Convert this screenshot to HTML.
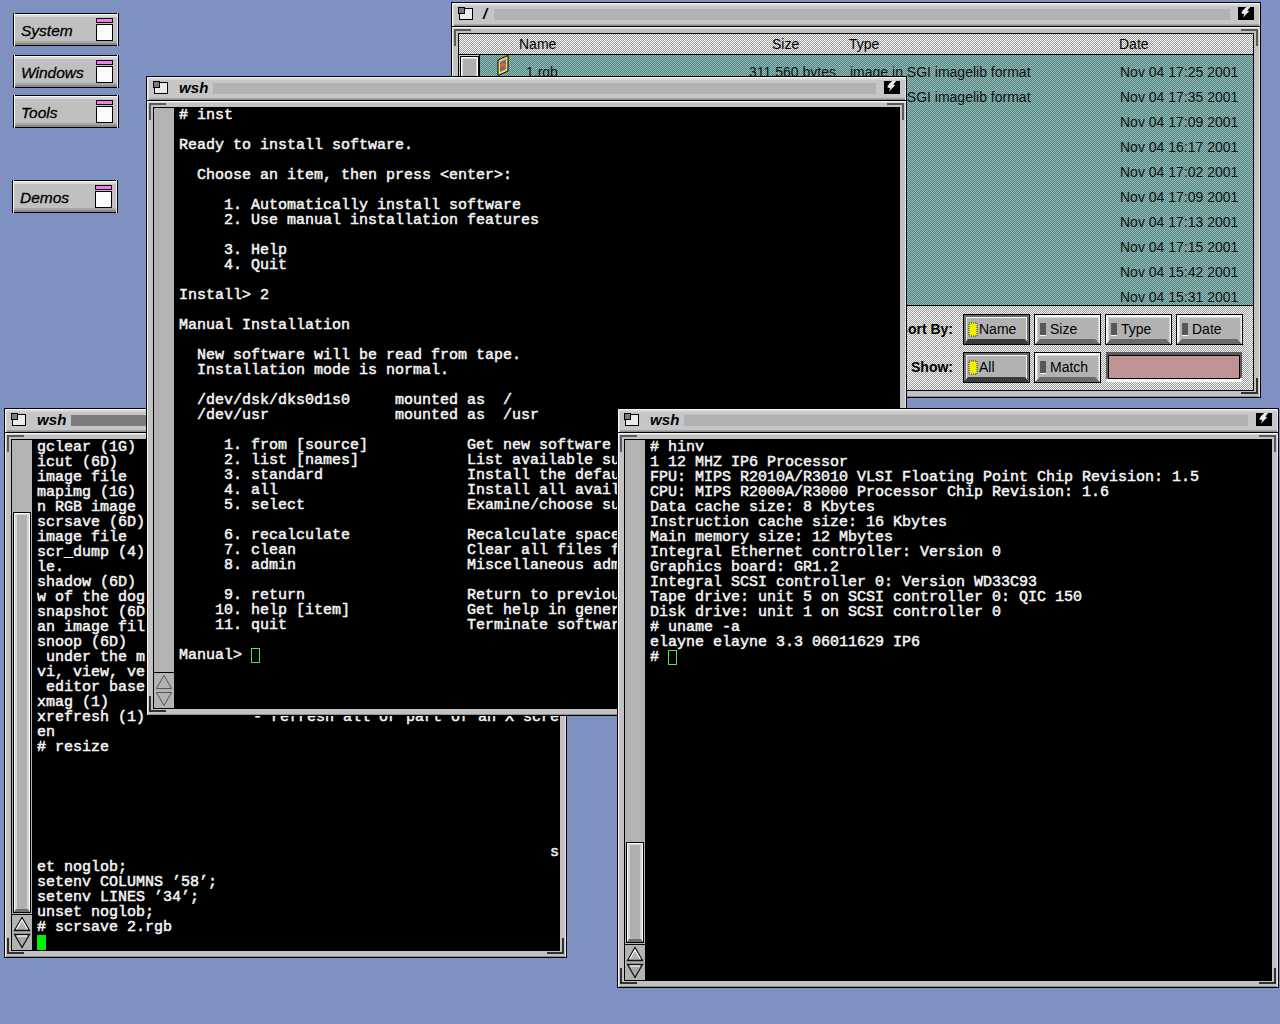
<!DOCTYPE html><html><head><meta charset="utf-8"><style>html,body{margin:0;padding:0}body{width:1280px;height:1024px;background:#7f91c0;position:relative;overflow:hidden;font-family:"Liberation Sans",sans-serif}</style></head><body>
<div style="position:absolute;left:13px;top:13px;width:106px;height:33px;background:linear-gradient(#000 0 1px,#f8f8f8 1px 2px,#d8d8d8 2px 4px,#c0c0c0 4px 28px,#a8a8a8 28px 30px,#8a8a8a 30px 32px,#000 32px);box-shadow:inset 1px 0 0 #000, inset -1px 0 0 #000, inset 2px 0 0 #f8f8f8, inset -2px 0 0 #e8e8e8"></div><div style="position:absolute;left:21px;top:20px;width:80px;height:22px;font:italic 15.5px/22px 'Liberation Sans',sans-serif;color:#000;-webkit-text-stroke:0.3px #000">System</div><div style="position:absolute;left:96px;top:18px;width:17px;height:5px;background:#f47af4;border:1px solid #000;box-sizing:border-box"></div><div style="position:absolute;left:96px;top:24px;width:17px;height:17px;background:#fbfbfb;border:1px solid #000;box-sizing:border-box"></div>
<div style="position:absolute;left:13px;top:55px;width:106px;height:33px;background:linear-gradient(#000 0 1px,#f8f8f8 1px 2px,#d8d8d8 2px 4px,#c0c0c0 4px 28px,#a8a8a8 28px 30px,#8a8a8a 30px 32px,#000 32px);box-shadow:inset 1px 0 0 #000, inset -1px 0 0 #000, inset 2px 0 0 #f8f8f8, inset -2px 0 0 #e8e8e8"></div><div style="position:absolute;left:21px;top:62px;width:80px;height:22px;font:italic 15.5px/22px 'Liberation Sans',sans-serif;color:#000;-webkit-text-stroke:0.3px #000">Windows</div><div style="position:absolute;left:96px;top:60px;width:17px;height:5px;background:#f47af4;border:1px solid #000;box-sizing:border-box"></div><div style="position:absolute;left:96px;top:66px;width:17px;height:17px;background:#fbfbfb;border:1px solid #000;box-sizing:border-box"></div>
<div style="position:absolute;left:13px;top:95px;width:106px;height:33px;background:linear-gradient(#000 0 1px,#f8f8f8 1px 2px,#d8d8d8 2px 4px,#c0c0c0 4px 28px,#a8a8a8 28px 30px,#8a8a8a 30px 32px,#000 32px);box-shadow:inset 1px 0 0 #000, inset -1px 0 0 #000, inset 2px 0 0 #f8f8f8, inset -2px 0 0 #e8e8e8"></div><div style="position:absolute;left:21px;top:102px;width:80px;height:22px;font:italic 15.5px/22px 'Liberation Sans',sans-serif;color:#000;-webkit-text-stroke:0.3px #000">Tools</div><div style="position:absolute;left:96px;top:100px;width:17px;height:5px;background:#f47af4;border:1px solid #000;box-sizing:border-box"></div><div style="position:absolute;left:96px;top:106px;width:17px;height:17px;background:#fbfbfb;border:1px solid #000;box-sizing:border-box"></div>
<div style="position:absolute;left:12px;top:180px;width:106px;height:33px;background:linear-gradient(#000 0 1px,#f8f8f8 1px 2px,#d8d8d8 2px 4px,#c0c0c0 4px 28px,#a8a8a8 28px 30px,#8a8a8a 30px 32px,#000 32px);box-shadow:inset 1px 0 0 #000, inset -1px 0 0 #000, inset 2px 0 0 #f8f8f8, inset -2px 0 0 #e8e8e8"></div><div style="position:absolute;left:20px;top:187px;width:80px;height:22px;font:italic 15.5px/22px 'Liberation Sans',sans-serif;color:#000;-webkit-text-stroke:0.3px #000">Demos</div><div style="position:absolute;left:95px;top:185px;width:17px;height:5px;background:#f47af4;border:1px solid #000;box-sizing:border-box"></div><div style="position:absolute;left:95px;top:191px;width:17px;height:17px;background:#fbfbfb;border:1px solid #000;box-sizing:border-box"></div>
<div style="position:absolute;left:451px;top:2px;width:810px;height:396px;background:#c2c2c2;outline:none;box-shadow:inset 0 0 0 1px #000"></div><div style="position:absolute;left:452px;top:3px;width:808px;height:23px;background:linear-gradient(#f6f6f6 0 1px,#d6d6d6 1px 3px,#c6c6c6 3px 21px,#a6a6a6 21px 22px,#8e8e8e 22px);box-shadow:inset 1px 0 0 #f6f6f6, inset 2px 0 0 #d6d6d6, inset -1px 0 0 #e6e6e6"></div><div style="position:absolute;left:452px;top:26px;width:808px;height:1px;background:#000"></div><div style="position:absolute;left:452px;top:27px;width:808px;height:370px;box-shadow:inset 1px 1px 0 #f6f6f6, inset 0 2px 0 #d6d6d6, inset -1px 0 0 #e6e6e6, inset 0 -1px 0 #8e8e8e"></div><div style="position:absolute;left:459px;top:8px;width:13px;height:11px;background:#ececec;border:1px solid #000;box-sizing:border-box;width:14px;height:12px"></div><div style="position:absolute;left:458px;top:7px;width:7px;height:7px;background:#7a7a7a;border:1px solid #000;box-sizing:border-box"></div><div style="position:absolute;left:483px;top:4px;width:60px;height:20px;font:italic bold 15px/20px 'Liberation Sans',sans-serif;color:#000;white-space:pre;letter-spacing:0.1px">/</div><div style="position:absolute;left:494px;top:9px;width:736px;height:11px;background:#b2b2b2"></div><div style="position:absolute;left:1238px;top:7px;width:16px;height:13px;"><svg width="16" height="13" viewBox="0 0 16 13" style="position:absolute;left:0;top:0"><rect width="16" height="13" fill="#000"/><polygon points="8.3,0 12.2,0 9.3,3.6 11.2,4.3 5,10.4 6.2,6.9 3.5,6.5 3.7,5.1 5.6,2.6" fill="#ececec"/></svg></div><div style="position:absolute;left:454px;top:29px;width:17px;height:2px;background:#5a5a5a"></div><div style="position:absolute;left:454px;top:29px;width:2px;height:17px;background:#5a5a5a"></div><div style="position:absolute;left:1241px;top:29px;width:17px;height:2px;background:#5a5a5a"></div><div style="position:absolute;left:1256px;top:29px;width:2px;height:17px;background:#5a5a5a"></div><div style="position:absolute;left:454px;top:392px;width:17px;height:2px;background:#303030"></div><div style="position:absolute;left:454px;top:378px;width:2px;height:16px;background:#303030"></div><div style="position:absolute;left:1241px;top:392px;width:17px;height:2px;background:#303030"></div><div style="position:absolute;left:1256px;top:378px;width:2px;height:16px;background:#303030"></div>
<div style="position:absolute;left:458px;top:33px;width:796px;height:358px;background:#000"></div>
<svg width="794" height="20" style="position:absolute;left:459px;top:34px" shape-rendering="crispEdges"><defs><pattern id="chk1" width="2" height="2" patternUnits="userSpaceOnUse"><rect width="2" height="2" fill="#fcfcfc"/><rect width="1" height="1" fill="#9a9a9a"/><rect x="1" y="1" width="1" height="1" fill="#9a9a9a"/></pattern></defs><rect width="794" height="20" fill="url(#chk1)"/></svg>
<div style="position:absolute;left:459px;top:55px;width:20px;height:250px;background:#cfcfcf"></div>
<div style="position:absolute;left:460px;top:56px;width:19px;height:260px;background:#fff;border:1px solid #000;box-sizing:border-box;box-shadow:inset 0 0 0 1px #fff, inset 0 0 0 2px #d8d8d8"></div>
<div style="position:absolute;left:463px;top:59px;width:13px;height:250px;background:#b0b0b0"></div>
<div style="position:absolute;left:479px;top:55px;width:1px;height:250px;background:#000"></div>
<svg width="773" height="250" style="position:absolute;left:480px;top:55px" shape-rendering="crispEdges"><defs><pattern id="chk2" width="2" height="2" patternUnits="userSpaceOnUse"><rect width="2" height="2" fill="#92bebc"/><rect width="1" height="1" fill="#56807e"/><rect x="1" y="1" width="1" height="1" fill="#56807e"/></pattern></defs><rect width="773" height="250" fill="url(#chk2)"/></svg>
<div style="position:absolute;left:497px;top:55px;width:13px;height:21px;"><svg width="13" height="21" viewBox="0 0 13 21" style="position:absolute;left:0;top:0"><polygon points="1,5 11,0.5 11,16 1,20.5" fill="#e8e050" stroke="#000" stroke-width="1"/><polygon points="3,7 9,4 9,14 3,17" fill="#8a5aa0"/><polygon points="3,10 6,8 9,9 9,12 6,11 3,13" fill="#d07030"/></svg></div>
<svg width="794" height="84" style="position:absolute;left:459px;top:306px" shape-rendering="crispEdges"><defs><pattern id="chk3" width="2" height="2" patternUnits="userSpaceOnUse"><rect width="2" height="2" fill="#fcfcfc"/><rect width="1" height="1" fill="#9a9a9a"/><rect x="1" y="1" width="1" height="1" fill="#9a9a9a"/></pattern></defs><rect width="794" height="84" fill="url(#chk3)"/></svg>
<div style="position:absolute;left:519px;top:34px;width:60px;height:20px;font:14px/20px 'Liberation Sans',sans-serif;color:#000;white-space:pre">Name</div>
<div style="position:absolute;left:772px;top:34px;width:60px;height:20px;font:14px/20px 'Liberation Sans',sans-serif;color:#000;white-space:pre">Size</div>
<div style="position:absolute;left:849px;top:34px;width:60px;height:20px;font:14px/20px 'Liberation Sans',sans-serif;color:#000;white-space:pre">Type</div>
<div style="position:absolute;left:1119px;top:34px;width:60px;height:20px;font:14px/20px 'Liberation Sans',sans-serif;color:#000;white-space:pre">Date</div>
<div style="position:absolute;left:1120px;top:62px;width:140px;height:20px;font:14px/20px 'Liberation Sans',sans-serif;color:#111;white-space:pre">Nov 04 17:25 2001</div>
<div style="position:absolute;left:1120px;top:87px;width:140px;height:20px;font:14px/20px 'Liberation Sans',sans-serif;color:#111;white-space:pre">Nov 04 17:35 2001</div>
<div style="position:absolute;left:1120px;top:112px;width:140px;height:20px;font:14px/20px 'Liberation Sans',sans-serif;color:#111;white-space:pre">Nov 04 17:09 2001</div>
<div style="position:absolute;left:1120px;top:137px;width:140px;height:20px;font:14px/20px 'Liberation Sans',sans-serif;color:#111;white-space:pre">Nov 04 16:17 2001</div>
<div style="position:absolute;left:1120px;top:162px;width:140px;height:20px;font:14px/20px 'Liberation Sans',sans-serif;color:#111;white-space:pre">Nov 04 17:02 2001</div>
<div style="position:absolute;left:1120px;top:187px;width:140px;height:20px;font:14px/20px 'Liberation Sans',sans-serif;color:#111;white-space:pre">Nov 04 17:09 2001</div>
<div style="position:absolute;left:1120px;top:212px;width:140px;height:20px;font:14px/20px 'Liberation Sans',sans-serif;color:#111;white-space:pre">Nov 04 17:13 2001</div>
<div style="position:absolute;left:1120px;top:237px;width:140px;height:20px;font:14px/20px 'Liberation Sans',sans-serif;color:#111;white-space:pre">Nov 04 17:15 2001</div>
<div style="position:absolute;left:1120px;top:262px;width:140px;height:20px;font:14px/20px 'Liberation Sans',sans-serif;color:#111;white-space:pre">Nov 04 15:42 2001</div>
<div style="position:absolute;left:1120px;top:287px;width:140px;height:20px;font:14px/20px 'Liberation Sans',sans-serif;color:#111;white-space:pre">Nov 04 15:31 2001</div>
<div style="position:absolute;left:526px;top:62px;width:80px;height:20px;font:14px/20px 'Liberation Sans',sans-serif;color:#111;white-space:pre">1.rgb</div>
<div style="position:absolute;left:700px;top:62px;width:136px;height:20px;font:14px/20px 'Liberation Sans',sans-serif;color:#111;white-space:pre;text-align:right">311,560 bytes</div>
<div style="position:absolute;left:850px;top:62px;width:300px;height:20px;font:14px/20px 'Liberation Sans',sans-serif;color:#111;white-space:pre">image in SGI imagelib format</div>
<div style="position:absolute;left:850px;top:87px;width:300px;height:20px;font:14px/20px 'Liberation Sans',sans-serif;color:#111;white-space:pre">image in SGI imagelib format</div>
<div style="position:absolute;left:853px;top:319px;width:100px;height:20px;font:bold 14px/20px 'Liberation Sans',sans-serif;color:#000;white-space:pre;text-align:right">Sort By:</div>
<div style="position:absolute;left:853px;top:357px;width:100px;height:20px;font:bold 14px/20px 'Liberation Sans',sans-serif;color:#000;white-space:pre;text-align:right">Show:</div>
<div style="position:absolute;left:963px;top:314px;width:67px;height:31px;"><svg width="67" height="31" style="position:absolute;left:0;top:0" shape-rendering="crispEdges"><rect width="67" height="31" fill="#000"/><rect x="1" y="1" width="65" height="29" fill="#6c6c6c"/><rect x="3" y="3" width="61" height="24" fill="#f4f4f4"/><rect x="4" y="4" width="59" height="22" fill="#b2b2b2"/></svg><svg width="67" height="31" style="position:absolute;left:0;top:0"><polygon points="1,30 66,30 62,25 5,25" fill="#3a3a3a"/><rect x="6" y="9" width="8" height="13" fill="#f0f000" stroke="#333" stroke-width="1" stroke-dasharray="1 1"/></svg></div><div style="position:absolute;left:979px;top:319px;width:60px;height:20px;font:14px/20px 'Liberation Sans',sans-serif;color:#000;white-space:pre">Name</div>
<div style="position:absolute;left:1034px;top:314px;width:67px;height:31px;"><svg width="67" height="31" style="position:absolute;left:0;top:0" shape-rendering="crispEdges"><rect width="67" height="31" fill="#000"/><rect x="1" y="1" width="65" height="29" fill="#f8f8f8"/><rect x="3" y="3" width="62" height="25" fill="#d4d4d4"/><rect x="4" y="4" width="60" height="23" fill="#b2b2b2"/></svg><svg width="67" height="31" style="position:absolute;left:0;top:0"><polygon points="1,30 66,30 61,25 6,25" fill="#6a6a6a"/><rect x="6" y="9" width="6" height="12" fill="#585858"/><rect x="6" y="21" width="6" height="1" fill="#fff"/></svg></div><div style="position:absolute;left:1050px;top:319px;width:60px;height:20px;font:14px/20px 'Liberation Sans',sans-serif;color:#000;white-space:pre">Size</div>
<div style="position:absolute;left:1105px;top:314px;width:67px;height:31px;"><svg width="67" height="31" style="position:absolute;left:0;top:0" shape-rendering="crispEdges"><rect width="67" height="31" fill="#000"/><rect x="1" y="1" width="65" height="29" fill="#f8f8f8"/><rect x="3" y="3" width="62" height="25" fill="#d4d4d4"/><rect x="4" y="4" width="60" height="23" fill="#b2b2b2"/></svg><svg width="67" height="31" style="position:absolute;left:0;top:0"><polygon points="1,30 66,30 61,25 6,25" fill="#6a6a6a"/><rect x="6" y="9" width="6" height="12" fill="#585858"/><rect x="6" y="21" width="6" height="1" fill="#fff"/></svg></div><div style="position:absolute;left:1121px;top:319px;width:60px;height:20px;font:14px/20px 'Liberation Sans',sans-serif;color:#000;white-space:pre">Type</div>
<div style="position:absolute;left:1176px;top:314px;width:67px;height:31px;"><svg width="67" height="31" style="position:absolute;left:0;top:0" shape-rendering="crispEdges"><rect width="67" height="31" fill="#000"/><rect x="1" y="1" width="65" height="29" fill="#f8f8f8"/><rect x="3" y="3" width="62" height="25" fill="#d4d4d4"/><rect x="4" y="4" width="60" height="23" fill="#b2b2b2"/></svg><svg width="67" height="31" style="position:absolute;left:0;top:0"><polygon points="1,30 66,30 61,25 6,25" fill="#6a6a6a"/><rect x="6" y="9" width="6" height="12" fill="#585858"/><rect x="6" y="21" width="6" height="1" fill="#fff"/></svg></div><div style="position:absolute;left:1192px;top:319px;width:60px;height:20px;font:14px/20px 'Liberation Sans',sans-serif;color:#000;white-space:pre">Date</div>
<div style="position:absolute;left:963px;top:352px;width:67px;height:31px;"><svg width="67" height="31" style="position:absolute;left:0;top:0" shape-rendering="crispEdges"><rect width="67" height="31" fill="#000"/><rect x="1" y="1" width="65" height="29" fill="#6c6c6c"/><rect x="3" y="3" width="61" height="24" fill="#f4f4f4"/><rect x="4" y="4" width="59" height="22" fill="#b2b2b2"/></svg><svg width="67" height="31" style="position:absolute;left:0;top:0"><polygon points="1,30 66,30 62,25 5,25" fill="#3a3a3a"/><rect x="6" y="9" width="8" height="13" fill="#f0f000" stroke="#333" stroke-width="1" stroke-dasharray="1 1"/></svg></div><div style="position:absolute;left:979px;top:357px;width:60px;height:20px;font:14px/20px 'Liberation Sans',sans-serif;color:#000;white-space:pre">All</div>
<div style="position:absolute;left:1034px;top:352px;width:67px;height:31px;"><svg width="67" height="31" style="position:absolute;left:0;top:0" shape-rendering="crispEdges"><rect width="67" height="31" fill="#000"/><rect x="1" y="1" width="65" height="29" fill="#f8f8f8"/><rect x="3" y="3" width="62" height="25" fill="#d4d4d4"/><rect x="4" y="4" width="60" height="23" fill="#b2b2b2"/></svg><svg width="67" height="31" style="position:absolute;left:0;top:0"><polygon points="1,30 66,30 61,25 6,25" fill="#6a6a6a"/><rect x="6" y="9" width="6" height="12" fill="#585858"/><rect x="6" y="21" width="6" height="1" fill="#fff"/></svg></div><div style="position:absolute;left:1050px;top:357px;width:60px;height:20px;font:14px/20px 'Liberation Sans',sans-serif;color:#000;white-space:pre">Match</div>
<div style="position:absolute;left:1105px;top:352px;width:138px;height:31px;"><svg width="138" height="31" style="position:absolute;left:0;top:0"><rect x="1" y="0" width="136" height="27" fill="#5a5a5a"/><polygon points="1,30 137,30 137,26 134,26 3,26 1,28" fill="#f4f4f4"/><rect x="3" y="3" width="132" height="24" fill="#000"/><rect x="4" y="4" width="130" height="22" fill="#c09494"/></svg></div>
<div style="position:absolute;left:4px;top:408px;width:563px;height:550px;background:#c2c2c2;outline:none;box-shadow:inset 0 0 0 1px #000"></div><div style="position:absolute;left:5px;top:409px;width:561px;height:23px;background:linear-gradient(#f6f6f6 0 1px,#d6d6d6 1px 3px,#c6c6c6 3px 21px,#a6a6a6 21px 22px,#8e8e8e 22px);box-shadow:inset 1px 0 0 #f6f6f6, inset 2px 0 0 #d6d6d6, inset -1px 0 0 #e6e6e6"></div><div style="position:absolute;left:5px;top:432px;width:561px;height:1px;background:#000"></div><div style="position:absolute;left:5px;top:433px;width:561px;height:524px;box-shadow:inset 1px 1px 0 #f6f6f6, inset 0 2px 0 #d6d6d6, inset -1px 0 0 #e6e6e6, inset 0 -1px 0 #8e8e8e"></div><div style="position:absolute;left:12px;top:414px;width:13px;height:11px;background:#ececec;border:1px solid #000;box-sizing:border-box;width:14px;height:12px"></div><div style="position:absolute;left:11px;top:413px;width:7px;height:7px;background:#7a7a7a;border:1px solid #000;box-sizing:border-box"></div><div style="position:absolute;left:37px;top:410px;width:60px;height:20px;font:italic bold 15px/20px 'Liberation Sans',sans-serif;color:#000;white-space:pre;letter-spacing:0.1px">wsh</div><div style="position:absolute;left:71px;top:415px;width:465px;height:11px;background:#7c7c7c"></div><div style="position:absolute;left:544px;top:413px;width:16px;height:13px;"><svg width="16" height="13" viewBox="0 0 16 13" style="position:absolute;left:0;top:0"><rect width="16" height="13" fill="#000"/><polygon points="8.3,0 12.2,0 9.3,3.6 11.2,4.3 5,10.4 6.2,6.9 3.5,6.5 3.7,5.1 5.6,2.6" fill="#ececec"/></svg></div><div style="position:absolute;left:7px;top:435px;width:17px;height:2px;background:#5a5a5a"></div><div style="position:absolute;left:7px;top:435px;width:2px;height:17px;background:#5a5a5a"></div><div style="position:absolute;left:547px;top:435px;width:17px;height:2px;background:#5a5a5a"></div><div style="position:absolute;left:562px;top:435px;width:2px;height:17px;background:#5a5a5a"></div><div style="position:absolute;left:7px;top:952px;width:17px;height:2px;background:#303030"></div><div style="position:absolute;left:7px;top:938px;width:2px;height:16px;background:#303030"></div><div style="position:absolute;left:547px;top:952px;width:17px;height:2px;background:#303030"></div><div style="position:absolute;left:562px;top:938px;width:2px;height:16px;background:#303030"></div>
<div style="position:absolute;left:11px;top:439px;width:549px;height:512px;background:#000"></div><div style="position:absolute;left:12px;top:440px;width:20px;height:474px;background:#b3b3b3"></div><div style="position:absolute;left:13px;top:512px;width:18px;height:401px;"><svg width="18" height="401" style="position:absolute;left:0;top:0" shape-rendering="crispEdges"><rect width="18" height="401" fill="#000"/><rect x="1" y="1" width="16" height="399" fill="#fafafa"/><rect x="2" y="2" width="14" height="397" fill="#d4d4d4"/><rect x="4" y="3" width="10" height="394" fill="#b0b0b0"/></svg><svg width="18" height="401" style="position:absolute;left:0;top:0"><polygon points="1,400 17,400 15,397 3,397" fill="#707070"/></svg></div><div style="position:absolute;left:12px;top:915px;width:20px;height:35px;background:#b3b3b3"></div><div style="position:absolute;left:12px;top:915px;width:20px;height:35px;"><svg width="20" height="35" viewBox="0 0 20 35" style="position:absolute;left:0;top:0"><polygon points="10,2.5 17.5,15.5 2.5,15.5" fill="#b4b4b4" stroke="#111" stroke-width="1.3"/><polyline points="4.6,14 10,4.9 15.4,14" fill="none" stroke="#fff" stroke-width="1.1"/><polygon points="2.5,19.5 17.5,19.5 10,32.5" fill="#a8a8a8" stroke="#111" stroke-width="1.3"/><line x1="5" y1="21" x2="15" y2="21" stroke="#fff" stroke-width="1.2"/></svg></div><div style="position:absolute;left:37px;top:440px;width:522px;height:510px;overflow:hidden;font:15px/15px 'Liberation Mono',monospace;color:#f4f4f4;white-space:pre;-webkit-text-stroke:0.5px #f4f4f4">gclear (1G)
icut (6D)
image file
mapimg (1G)
n RGB image
scrsave (6D)
image file
scr_dump (4)
le.
shadow (6D)
w of the dog
snapshot (6D
an image fil
snoop (6D)
 under the m
vi, view, ve
 editor base
xmag (1)
xrefresh (1)            - refresh all or part of an X scre
en
# resize






                                                         s
et noglob;
setenv COLUMNS ’58’;
setenv LINES ’34’;
unset noglob;
# scrsave 2.rgb</div><div style="position:absolute;left:37px;top:935px;width:9px;height:15px;background:#00f000"></div>
<div style="position:absolute;left:146px;top:76px;width:761px;height:640px;background:#c2c2c2;outline:none;box-shadow:inset 0 0 0 1px #000"></div><div style="position:absolute;left:147px;top:77px;width:759px;height:23px;background:linear-gradient(#f6f6f6 0 1px,#d6d6d6 1px 3px,#c6c6c6 3px 21px,#a6a6a6 21px 22px,#8e8e8e 22px);box-shadow:inset 1px 0 0 #f6f6f6, inset 2px 0 0 #d6d6d6, inset -1px 0 0 #e6e6e6"></div><div style="position:absolute;left:147px;top:100px;width:759px;height:1px;background:#000"></div><div style="position:absolute;left:147px;top:101px;width:759px;height:614px;box-shadow:inset 1px 1px 0 #f6f6f6, inset 0 2px 0 #d6d6d6, inset -1px 0 0 #e6e6e6, inset 0 -1px 0 #8e8e8e"></div><div style="position:absolute;left:154px;top:82px;width:13px;height:11px;background:#ececec;border:1px solid #000;box-sizing:border-box;width:14px;height:12px"></div><div style="position:absolute;left:153px;top:81px;width:7px;height:7px;background:#7a7a7a;border:1px solid #000;box-sizing:border-box"></div><div style="position:absolute;left:179px;top:78px;width:60px;height:20px;font:italic bold 15px/20px 'Liberation Sans',sans-serif;color:#000;white-space:pre;letter-spacing:0.1px">wsh</div><div style="position:absolute;left:213px;top:83px;width:663px;height:11px;background:#b2b2b2"></div><div style="position:absolute;left:884px;top:81px;width:16px;height:13px;"><svg width="16" height="13" viewBox="0 0 16 13" style="position:absolute;left:0;top:0"><rect width="16" height="13" fill="#000"/><polygon points="8.3,0 12.2,0 9.3,3.6 11.2,4.3 5,10.4 6.2,6.9 3.5,6.5 3.7,5.1 5.6,2.6" fill="#ececec"/></svg></div><div style="position:absolute;left:149px;top:103px;width:17px;height:2px;background:#5a5a5a"></div><div style="position:absolute;left:149px;top:103px;width:2px;height:17px;background:#5a5a5a"></div><div style="position:absolute;left:887px;top:103px;width:17px;height:2px;background:#5a5a5a"></div><div style="position:absolute;left:902px;top:103px;width:2px;height:17px;background:#5a5a5a"></div><div style="position:absolute;left:149px;top:710px;width:17px;height:2px;background:#303030"></div><div style="position:absolute;left:149px;top:696px;width:2px;height:16px;background:#303030"></div><div style="position:absolute;left:887px;top:710px;width:17px;height:2px;background:#303030"></div><div style="position:absolute;left:902px;top:696px;width:2px;height:16px;background:#303030"></div>
<div style="position:absolute;left:153px;top:107px;width:747px;height:602px;background:#000"></div><div style="position:absolute;left:154px;top:108px;width:20px;height:564px;background:#b3b3b3"></div><div style="position:absolute;left:154px;top:673px;width:20px;height:35px;background:#b3b3b3"></div><div style="position:absolute;left:154px;top:673px;width:20px;height:35px;"><svg width="20" height="35" viewBox="0 0 20 35" style="position:absolute;left:0;top:0"><polygon points="10,2.5 17.5,15.5 2.5,15.5" fill="none" stroke="#555" stroke-width="1"/><polygon points="2.5,19.5 17.5,19.5 10,32.5" fill="none" stroke="#555" stroke-width="1"/></svg></div><div style="position:absolute;left:179px;top:108px;width:720px;height:600px;overflow:hidden;font:15px/15px 'Liberation Mono',monospace;color:#f4f4f4;white-space:pre;-webkit-text-stroke:0.5px #f4f4f4"># inst

Ready to install software.

  Choose an item, then press &lt;enter&gt;:

     1. Automatically install software
     2. Use manual installation features

     3. Help
     4. Quit

Install&gt; 2

Manual Installation

  New software will be read from tape.
  Installation mode is normal.

  /dev/dsk/dks0d1s0     mounted as  /
  /dev/usr              mounted as  /usr

     1. from [source]           Get new software from source
     2. list [names]            List available subsystems
     3. standard                Install the default software
     4. all                     Install all available software
     5. select                  Examine/choose subsystems

     6. recalculate             Recalculate space
     7. clean                   Clear all files from selections
     8. admin                   Miscellaneous administrative commands

     9. return                  Return to previous menu
    10. help [item]             Get help in general
    11. quit                    Terminate software installation

Manual&gt; </div><div style="position:absolute;left:251px;top:648px;width:9px;height:15px;border:1px solid #55e055;box-sizing:border-box"></div>
<div style="position:absolute;left:617px;top:408px;width:662px;height:580px;background:#c2c2c2;outline:none;box-shadow:inset 0 0 0 1px #000"></div><div style="position:absolute;left:618px;top:409px;width:660px;height:23px;background:linear-gradient(#f6f6f6 0 1px,#d6d6d6 1px 3px,#c6c6c6 3px 21px,#a6a6a6 21px 22px,#8e8e8e 22px);box-shadow:inset 1px 0 0 #f6f6f6, inset 2px 0 0 #d6d6d6, inset -1px 0 0 #e6e6e6"></div><div style="position:absolute;left:618px;top:432px;width:660px;height:1px;background:#000"></div><div style="position:absolute;left:618px;top:433px;width:660px;height:554px;box-shadow:inset 1px 1px 0 #f6f6f6, inset 0 2px 0 #d6d6d6, inset -1px 0 0 #e6e6e6, inset 0 -1px 0 #8e8e8e"></div><div style="position:absolute;left:625px;top:414px;width:13px;height:11px;background:#ececec;border:1px solid #000;box-sizing:border-box;width:14px;height:12px"></div><div style="position:absolute;left:624px;top:413px;width:7px;height:7px;background:#7a7a7a;border:1px solid #000;box-sizing:border-box"></div><div style="position:absolute;left:650px;top:410px;width:60px;height:20px;font:italic bold 15px/20px 'Liberation Sans',sans-serif;color:#000;white-space:pre;letter-spacing:0.1px">wsh</div><div style="position:absolute;left:684px;top:415px;width:564px;height:11px;background:#b2b2b2"></div><div style="position:absolute;left:1256px;top:413px;width:16px;height:13px;"><svg width="16" height="13" viewBox="0 0 16 13" style="position:absolute;left:0;top:0"><rect width="16" height="13" fill="#000"/><polygon points="8.3,0 12.2,0 9.3,3.6 11.2,4.3 5,10.4 6.2,6.9 3.5,6.5 3.7,5.1 5.6,2.6" fill="#ececec"/></svg></div><div style="position:absolute;left:620px;top:435px;width:17px;height:2px;background:#5a5a5a"></div><div style="position:absolute;left:620px;top:435px;width:2px;height:17px;background:#5a5a5a"></div><div style="position:absolute;left:1259px;top:435px;width:17px;height:2px;background:#5a5a5a"></div><div style="position:absolute;left:1274px;top:435px;width:2px;height:17px;background:#5a5a5a"></div><div style="position:absolute;left:620px;top:982px;width:17px;height:2px;background:#303030"></div><div style="position:absolute;left:620px;top:968px;width:2px;height:16px;background:#303030"></div><div style="position:absolute;left:1259px;top:982px;width:17px;height:2px;background:#303030"></div><div style="position:absolute;left:1274px;top:968px;width:2px;height:16px;background:#303030"></div>
<div style="position:absolute;left:624px;top:439px;width:648px;height:542px;background:#000"></div><div style="position:absolute;left:625px;top:440px;width:20px;height:504px;background:#b3b3b3"></div><div style="position:absolute;left:626px;top:842px;width:18px;height:101px;"><svg width="18" height="101" style="position:absolute;left:0;top:0" shape-rendering="crispEdges"><rect width="18" height="101" fill="#000"/><rect x="1" y="1" width="16" height="99" fill="#fafafa"/><rect x="2" y="2" width="14" height="97" fill="#d4d4d4"/><rect x="4" y="3" width="10" height="94" fill="#b0b0b0"/></svg><svg width="18" height="101" style="position:absolute;left:0;top:0"><polygon points="1,100 17,100 15,97 3,97" fill="#707070"/></svg></div><div style="position:absolute;left:625px;top:945px;width:20px;height:35px;background:#b3b3b3"></div><div style="position:absolute;left:625px;top:945px;width:20px;height:35px;"><svg width="20" height="35" viewBox="0 0 20 35" style="position:absolute;left:0;top:0"><polygon points="10,2.5 17.5,15.5 2.5,15.5" fill="#b4b4b4" stroke="#111" stroke-width="1.3"/><polyline points="4.6,14 10,4.9 15.4,14" fill="none" stroke="#fff" stroke-width="1.1"/><polygon points="2.5,19.5 17.5,19.5 10,32.5" fill="#a8a8a8" stroke="#111" stroke-width="1.3"/><line x1="5" y1="21" x2="15" y2="21" stroke="#fff" stroke-width="1.2"/></svg></div><div style="position:absolute;left:650px;top:440px;width:621px;height:540px;overflow:hidden;font:15px/15px 'Liberation Mono',monospace;color:#f4f4f4;white-space:pre;-webkit-text-stroke:0.5px #f4f4f4"># hinv
1 12 MHZ IP6 Processor
FPU: MIPS R2010A/R3010 VLSI Floating Point Chip Revision: 1.5
CPU: MIPS R2000A/R3000 Processor Chip Revision: 1.6
Data cache size: 8 Kbytes
Instruction cache size: 16 Kbytes
Main memory size: 12 Mbytes
Integral Ethernet controller: Version 0
Graphics board: GR1.2
Integral SCSI controller 0: Version WD33C93
Tape drive: unit 5 on SCSI controller 0: QIC 150
Disk drive: unit 1 on SCSI controller 0
# uname -a
elayne elayne 3.3 06011629 IP6
# </div><div style="position:absolute;left:668px;top:650px;width:9px;height:15px;border:1px solid #55e055;box-sizing:border-box"></div>
</body></html>
